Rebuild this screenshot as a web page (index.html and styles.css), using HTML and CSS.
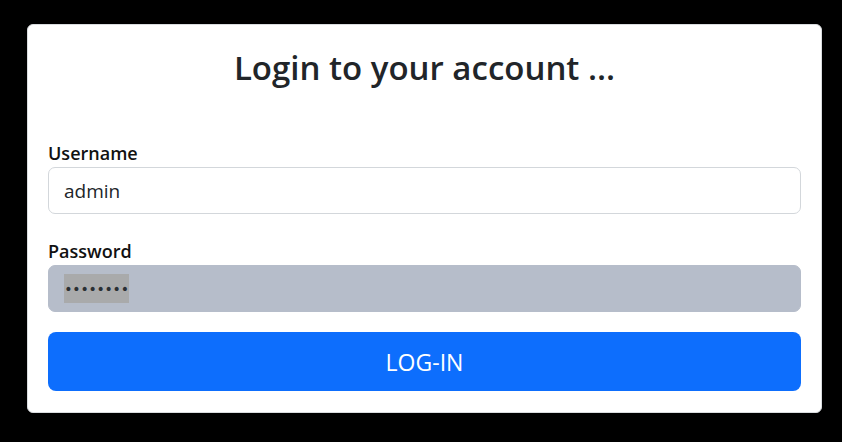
FILE: index.html
```html
<!DOCTYPE html>
<html>
<head>
<meta charset="utf-8">
<link rel="stylesheet" href="styles.css">
</head>
<body>
<div class="card">
  <h1 class="title">Login to your account ...</h1>
  <form class="form">
    <div class="field">
      <label class="label">Username</label>
      <div class="input">admin</div>
    </div>
    <div class="field field-last">
      <label class="label">Password</label>
      <div class="input input-filled"><span class="dots">••••••••</span></div>
    </div>
    <div class="btn">LOG-IN</div>
  </form>
</div>
</body>
</html>
```
FILE: styles.css
```css
html, body { margin: 0; height: 100%; }
body {
  background: #000;
  padding: 24px 20px 0 27px;
  box-sizing: border-box;
  font-family: "Open Sans", "Noto Sans", sans-serif;
  color: #212529;
}
.card {
  background: #fff;
  border: 1px solid #d9dcdf;
  border-radius: 6px;
  height: 389px;
  box-sizing: border-box;
  padding: 20px 20px 0 20px;
}
.title {
  margin: 0;
  text-align: center;
  font-size: 33px;
  font-weight: 600;
  line-height: 46px;
}
.form { margin-top: 50px; display: flex; flex-direction: column; }
.field { display: flex; flex-direction: column; margin-bottom: 25px; }
.field-last { margin-bottom: 20px; }
.label {
  font-size: 18px;
  font-weight: 600;
  line-height: 24px;
  margin-bottom: 2px;
  color: #111;
}
.input {
  height: 47px;
  box-sizing: border-box;
  border: 1px solid #d3d7db;
  border-radius: 7px;
  padding: 0 15px;
  font-size: 19px;
  display: flex;
  align-items: center;
  color: #212529;
}
.input-filled {
  background: #b6bdca;
  border-color: #b6bdca;
}
.dots {
  background: #a9aaab;
  height: 29px;
  width: 65px;
  display: flex;
  align-items: center;
  justify-content: center;
  font-family: "DejaVu Sans", sans-serif;
  font-size: 14px;
  letter-spacing: -0.2px;
  color: #2b2f33;
}
.btn {
  height: 59px;
  background: #0d6efd;
  border-radius: 8px;
  color: #fff;
  font-size: 23px;
  display: flex;
  align-items: center;
  justify-content: center;
}
```
